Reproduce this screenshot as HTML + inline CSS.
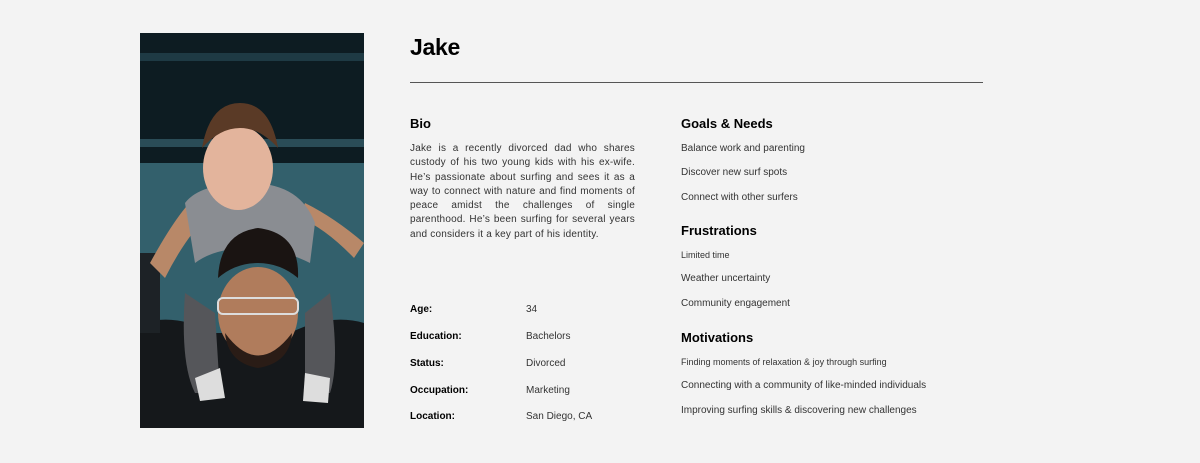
<!DOCTYPE html>
<html><head><meta charset="utf-8"><style>
body{margin:0;width:1200px;height:463px;background:#f3f3f3;font-family:"Liberation Sans",sans-serif;color:#222;position:relative;overflow:hidden}
.a{position:absolute}
h1{position:absolute;left:410px;top:34px;margin:0;font-size:23px;font-weight:900;color:#000;letter-spacing:-0.3px}
.h{position:absolute;font-size:13px;font-weight:bold;color:#000;margin:0}
.t{position:absolute;font-size:10px;color:#333;white-space:nowrap;top:0}
.l{position:absolute;font-size:10px;font-weight:bold;color:#000}
</style></head><body>
<div class="a" style="left:140px;top:33px;width:224px;height:395px;overflow:hidden;background:#2e5560">
<svg width="224" height="395" viewBox="0 0 224 395">
<rect width="224" height="395" fill="#305a66"/>
<rect width="224" height="130" fill="#0d1c22"/>
<rect y="20" width="224" height="8" fill="#1e3a44"/>
<rect y="106" width="224" height="8" fill="#2a4c57"/>
<rect y="130" width="224" height="265" fill="#33606c"/>
<path d="M0 290 Q40 280 70 300 L150 300 Q190 280 224 290 L224 395 L0 395Z" fill="#15181b"/>
<rect x="0" y="220" width="20" height="80" fill="#1d2226"/>
<path d="M10 230 Q40 175 60 160 L70 180 Q45 205 25 245Z" fill="#b88868"/>
<path d="M214 225 Q185 195 160 185 L165 170 Q195 185 224 210Z" fill="#b88868"/>
<path d="M45 170 Q60 150 110 150 Q160 150 175 190 L170 230 Q140 215 110 215 Q75 215 55 230Z" fill="#8a8d92"/>
<path d="M45 260 Q40 330 55 360 L80 360 L75 280Z" fill="#55565a"/>
<path d="M190 260 Q200 330 190 360 L165 360 L165 280Z" fill="#55565a"/>
<ellipse cx="98" cy="135" rx="35" ry="42" fill="#e3b49c"/>
<path d="M62 115 Q70 70 100 70 Q130 70 138 115 Q120 95 100 95 Q80 95 62 115Z" fill="#5a3a26"/>
<ellipse cx="118" cy="280" rx="40" ry="46" fill="#b07c5c"/>
<path d="M78 245 Q80 200 118 195 Q160 200 158 245 Q140 230 118 230 Q95 230 78 245Z" fill="#1a1412"/>
<path d="M85 300 Q118 345 152 300 Q150 330 118 335 Q88 330 85 300Z" fill="#2a1c16"/>
<rect x="78" y="265" width="80" height="16" rx="5" fill="none" stroke="#ddd" stroke-width="2"/>
<path d="M55 345 L80 335 L85 365 L60 368Z" fill="#ddd"/>
<path d="M165 340 L190 345 L188 370 L163 368Z" fill="#ddd"/>
</svg></div>
<h1>Jake</h1>
<div class="a" style="left:410px;top:82px;width:573px;height:1px;background:#555"></div>
<div class="h" style="left:410px;top:116px">Bio</div>
<div class="a" style="left:410px;top:142px;width:225px;font-size:10px;line-height:14.3px;color:#333;text-align:justify;letter-spacing:0.2px">Jake is a recently divorced dad who shares custody of his two young kids with his ex-wife. He’s passionate about surfing and sees it as a way to connect with nature and find moments of peace amidst the challenges of single parenthood. He’s been surfing for several years and considers it a key part of his identity.</div>
<div class="l" style="left:410px;top:304px">Age:</div><div class="t" style="left:526px;top:304px">34</div>
<div class="l" style="left:410px;top:331px">Education:</div><div class="t" style="left:526px;top:331px">Bachelors</div>
<div class="l" style="left:410px;top:358px">Status:</div><div class="t" style="left:526px;top:358px">Divorced</div>
<div class="l" style="left:410px;top:385px">Occupation:</div><div class="t" style="left:526px;top:385px">Marketing</div>
<div class="l" style="left:410px;top:411px">Location:</div><div class="t" style="left:526px;top:411px">San Diego, CA</div>
<div class="h" style="left:681px;top:116px">Goals &amp; Needs</div>
<div class="t" style="left:681px;top:143px">Balance work and parenting</div>
<div class="t" style="left:681px;top:167px">Discover new surf spots</div>
<div class="t" style="left:681px;top:192px">Connect with other surfers</div>
<div class="h" style="left:681px;top:223px">Frustrations</div>
<div class="t" style="left:681px;top:250px;font-size:9px">Limited time</div>
<div class="t" style="left:681px;top:273px">Weather uncertainty</div>
<div class="t" style="left:681px;top:298px">Community engagement</div>
<div class="h" style="left:681px;top:330px">Motivations</div>
<div class="t" style="left:681px;top:357px;font-size:9px">Finding moments of relaxation &amp; joy through surfing</div>
<div class="t" style="left:681px;top:380px">Connecting with a community of like-minded individuals</div>
<div class="t" style="left:681px;top:405px">Improving surfing skills &amp; discovering new challenges</div>
</body></html>
